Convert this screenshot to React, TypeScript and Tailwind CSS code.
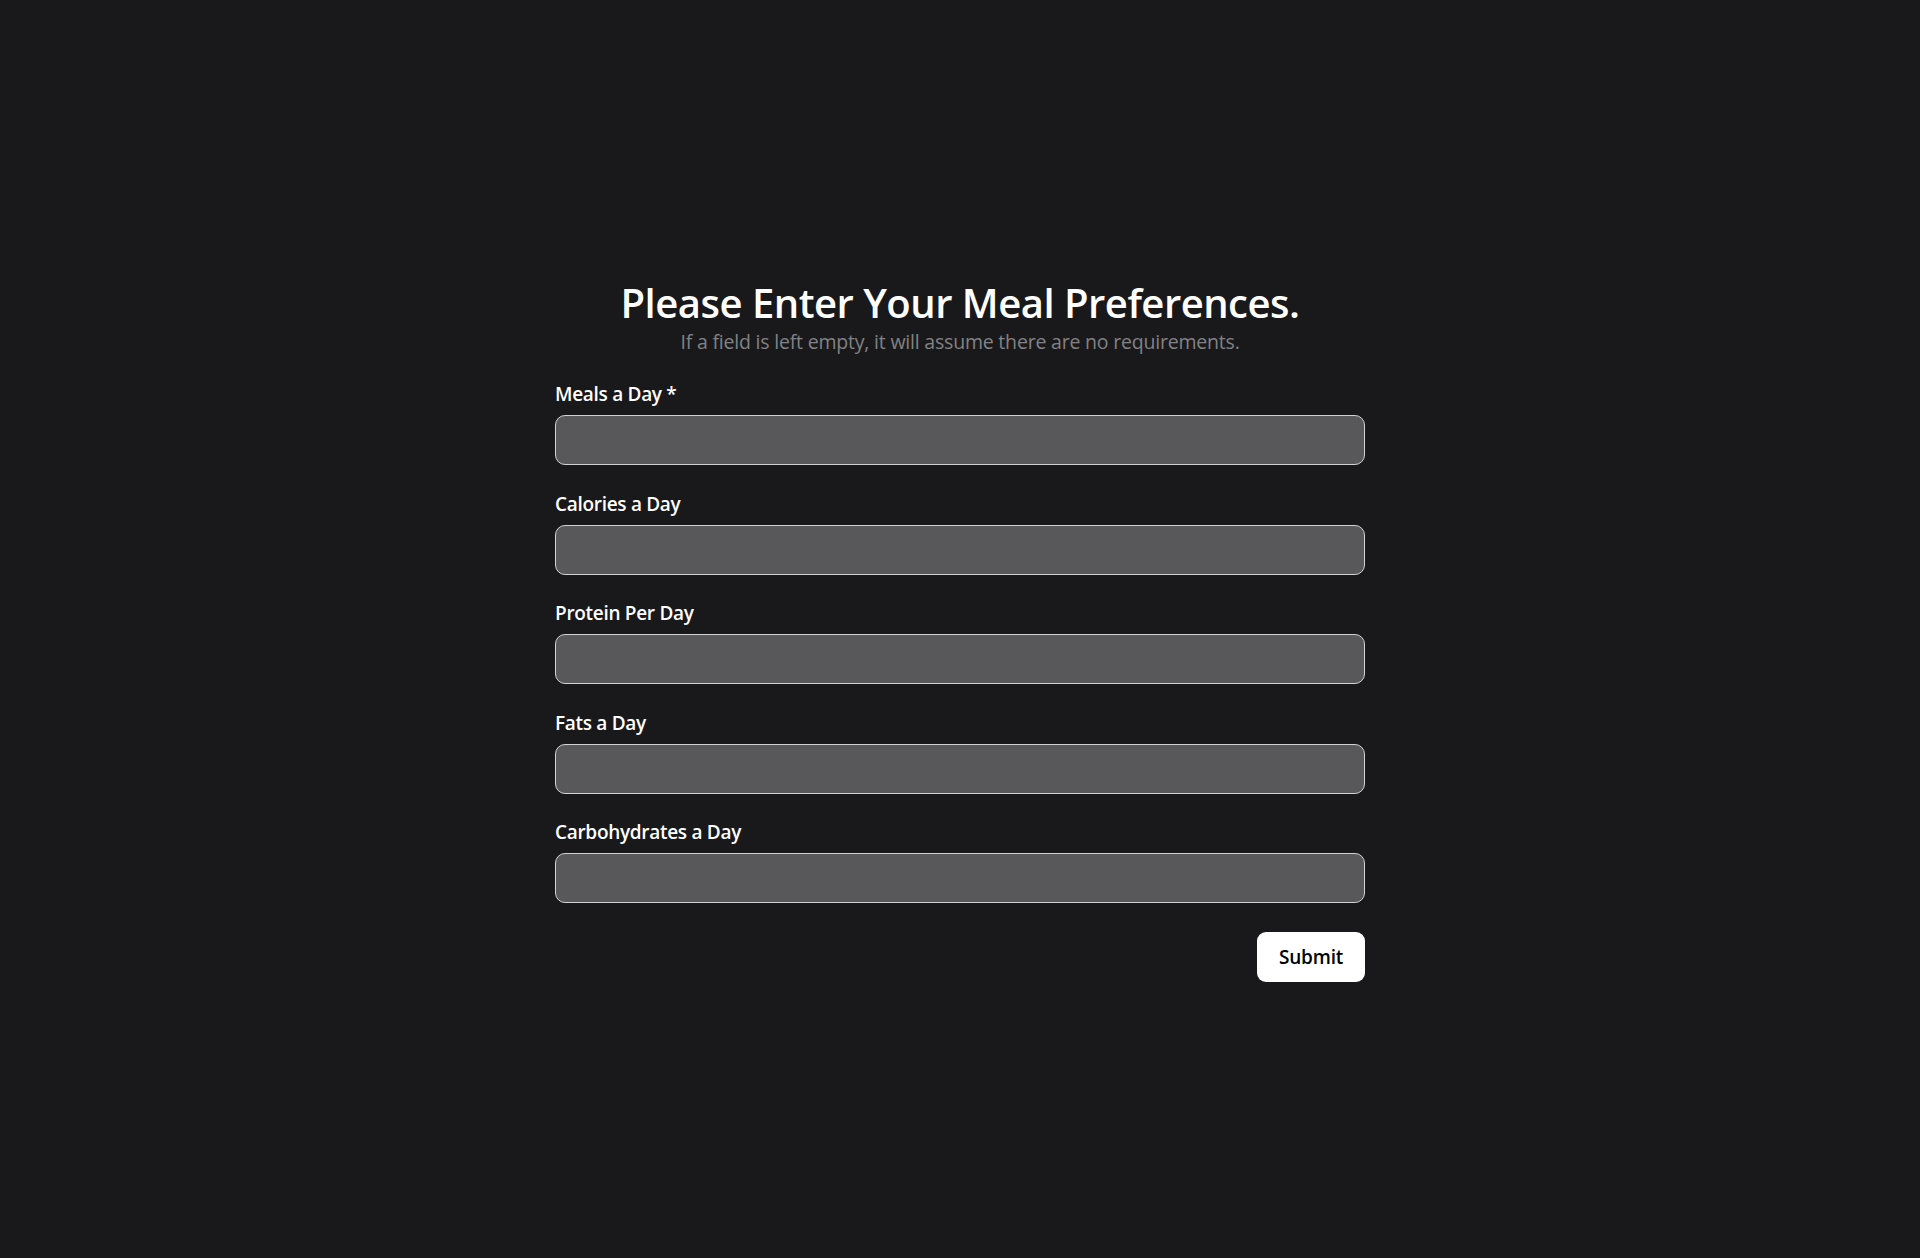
import React from "react";

const fields = [
  "Meals a Day *",
  "Calories a Day",
  "Protein Per Day",
  "Fats a Day",
  "Carbohydrates a Day",
];

export default function App() {
  return (
    <div
      className="min-h-screen w-full bg-[#19191b] flex flex-col items-center pt-[279px]"
      style={{ fontFamily: '"Open Sans", "Noto Sans", sans-serif' }}
    >
      <h1 className="text-[40px] leading-[48px] font-semibold text-white tracking-[-0.5px]">
        Please Enter Your Meal Preferences.
      </h1>
      <p className="mt-[3px] text-[19.5px] leading-[24px] text-[#828284] tracking-[-0.2px]">
        If a field is left empty, it will assume there are no requirements.
      </p>
      <form
        className="w-[810px] mt-[28px] flex flex-col"
        onSubmit={(e) => e.preventDefault()}
      >
        {fields.map((f, i) => (
          <div key={f} className={i === 0 ? "flex flex-col" : "flex flex-col mt-[26.5px]"}>
            <label className="text-[19px] leading-[24px] font-semibold text-white tracking-[-0.3px] mb-[9px]">
              {f}
            </label>
            <input
              type="text"
              className="h-[50px] w-full rounded-[10px] border-[1.5px] border-[#d2d2d4] bg-[#58585a] px-3 text-white outline-none"
            />
          </div>
        ))}
        <div className="flex justify-end mt-[29px]">
          <button
            type="submit"
            className="h-[50px] w-[108px] rounded-[9px] bg-white text-[19px] font-semibold text-black tracking-[-0.2px]"
          >
            Submit
          </button>
        </div>
      </form>
    </div>
  );
}
